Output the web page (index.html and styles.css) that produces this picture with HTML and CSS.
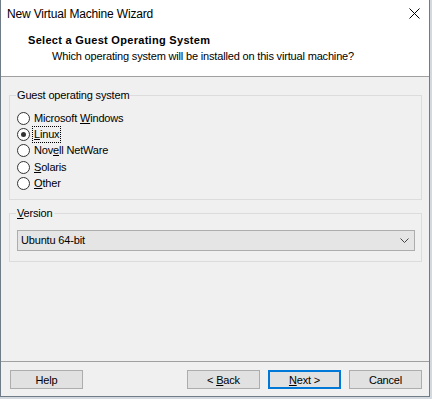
FILE: index.html
```html
<!DOCTYPE html>
<html lang="en">
<head>
  <meta charset="UTF-8" />
  <title>New Virtual Machine Wizard</title>
  <link rel="stylesheet" href="styles.css">
</head>
<body>
  <div class="window">
    <div class="titlebar">
      <span class="title">New Virtual Machine Wizard</span>
      <button class="close-btn" title="Close">
        <svg width="11" height="11" viewBox="0 0 11 11">
          <path d="M0.5 0.5 L10.5 10.5 M10.5 0.5 L0.5 10.5" stroke="#000" stroke-width="1" fill="none" />
        </svg>
      </button>
    </div>

    <div class="header">
      <div class="header-title">Select a Guest Operating System</div>
      <div class="header-sub">Which operating system will be installed on this virtual machine?</div>
    </div>

    <div class="content">
      <fieldset class="group">
        <legend>Guest operating system</legend>
        <div class="radio-row"><span class="radio"></span><span class="label">Microsoft <u>W</u>indows</span></div>
        <div class="radio-row"><span class="radio checked"></span><span class="label focused"><u>L</u>inux</span></div>
        <div class="radio-row"><span class="radio"></span><span class="label">Nov<u>e</u>ll NetWare</span></div>
        <div class="radio-row"><span class="radio"></span><span class="label"><u>S</u>olaris</span></div>
        <div class="radio-row"><span class="radio"></span><span class="label"><u>O</u>ther</span></div>
      </fieldset>

      <fieldset class="group version">
        <legend><u>V</u>ersion</legend>
        <div class="combo">
          <span>Ubuntu 64-bit</span>
          <svg width="9" height="5" viewBox="0 0 9 5">
            <polyline points="0.5,0.5 4.5,4.5 8.5,0.5" stroke="#444" stroke-width="1" fill="none" />
          </svg>
        </div>
      </fieldset>
    </div>

    <div class="footer">
      <button class="btn">Help</button>
      <div class="spacer"></div>
      <button class="btn">&lt; <u>B</u>ack</button>
      <button class="btn default"><u>N</u>ext &gt;</button>
      <button class="btn">Cancel</button>
    </div>
  </div>
</body>
</html>
```

FILE: styles.css
```css
body {
  margin: 0;
  background: #d3d9df;
  font-family: "Liberation Sans", Arial, sans-serif;
  font-size: 11px;
  letter-spacing: -0.17px;
  color: #000;
}

/* Dialog frame */
.window {
  box-sizing: border-box;
  width: 430px;
  height: 397px;
  border: 1px solid #6f7b87;
  border-top: none;
  background: #f0f0f0;
  display: flex;
  flex-direction: column;
}

.titlebar {
  height: 30px;
  background: #fff;
  display: flex;
  align-items: center;
  justify-content: space-between;
  padding-left: 6px;
}

.title {
  font-size: 12px;
  margin-top: -3px;
}

.close-btn {
  border: none;
  background: transparent;
  width: 30px;
  height: 30px;
  padding: 0;
  display: flex;
  align-items: center;
  justify-content: center;
  margin-top: -3px;
}

/* Wizard header */
.header {
  height: 47px;
  background: #fff;
  border-bottom: 1px solid #a0a0a0;
  padding: 4px 0 0 27px;
  box-sizing: border-box;
  line-height: 13px;
}

.header-title {
  font-weight: bold;
  letter-spacing: 0.3px;
}

.header-sub {
  margin-top: 3px;
  padding-left: 24px;
}

/* Group boxes */
.content {
  flex: 1;
  padding-top: 12px;
}

.group {
  margin: 0 7px 0 8px;
  padding: 8px 6px 8px 6px;
  border: 1px solid #dcdcdc;
  line-height: 13px;
}

.group legend {
  padding: 0 1px;
  line-height: 13px;
}

.version {
  margin-top: 7px;
  padding-top: 10px;
  padding-bottom: 10px;
}

.radio-row {
  height: 16.3px;
  display: flex;
  align-items: center;
  padding-left: 1px;
}

.radio {
  box-sizing: border-box;
  width: 13px;
  height: 13px;
  border: 1px solid #333;
  border-radius: 50%;
  background: #fff;
  display: flex;
  align-items: center;
  justify-content: center;
  margin-right: 2px;
}

.radio.checked::after {
  content: "";
  width: 5px;
  height: 5px;
  border-radius: 50%;
  background: #333;
}

.label {
  padding: 1px 1px;
  border: 1px dotted transparent;
}

.label.focused {
  border-color: #000;
}

.combo {
  box-sizing: border-box;
  height: 21px;
  margin-left: 1px;
  background: #e5e5e5;
  border: 1px solid #adadad;
  display: flex;
  align-items: center;
  justify-content: space-between;
  padding: 0 5px 0 3px;
}

/* Bottom button bar */
.footer {
  border-top: 1px solid #a0a0a0;
  display: flex;
  gap: 8px;
  padding: 8px 7px 7px 9px;
}

.spacer {
  flex: 1;
}

.btn {
  box-sizing: border-box;
  width: 73px;
  height: 19px;
  background: #e1e1e1;
  border: 1px solid #adadad;
  font-family: "Liberation Sans", Arial, sans-serif;
  font-size: 11px;
  letter-spacing: -0.17px;
  color: #000;
  padding: 0;
}

.btn.default {
  border: 2px solid #0078d7;
}
```
